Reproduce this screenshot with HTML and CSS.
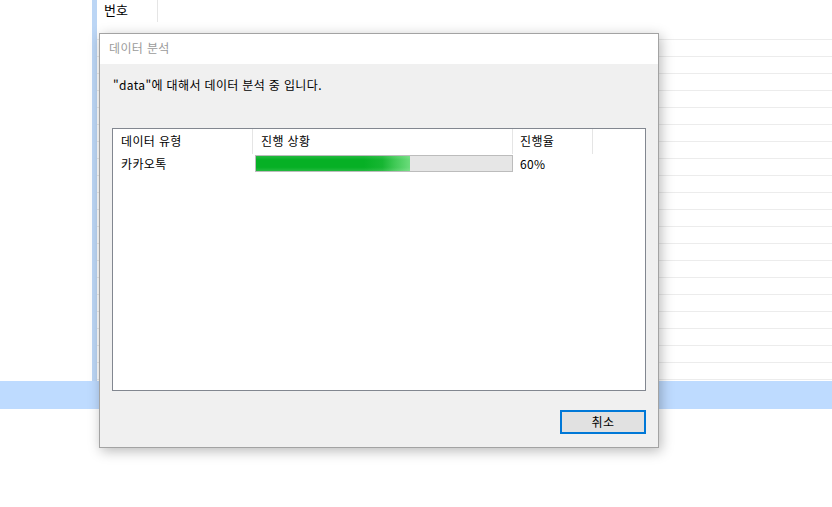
FILE: index.html
```html
<!DOCTYPE html>
<html lang="ko">
<head>
<meta charset="utf-8">
<link rel="stylesheet" href="styles.css">
</head>
<body>
<div class="page">
  <div class="list-area">
    <div class="gutter"></div>
    <div class="strip"></div>
    <div class="list">
      <div class="list-head">
        <div class="head-cell">번호</div>
      </div>
      <div class="row"></div><div class="row"></div><div class="row"></div><div class="row"></div>
      <div class="row"></div><div class="row"></div><div class="row"></div><div class="row"></div>
      <div class="row"></div><div class="row"></div><div class="row"></div><div class="row"></div>
      <div class="row"></div><div class="row"></div><div class="row"></div><div class="row"></div>
      <div class="row"></div><div class="row"></div><div class="row"></div><div class="row"></div>
      <div class="row"></div>
    </div>
  </div>
  <div class="selected-band"></div>
</div>

<div class="dialog">
  <div class="title-bar">데이터 분석</div>
  <div class="dialog-body">
    <div class="message">"data"에 대해서 데이터 분석 중 입니다.</div>
    <div class="listbox">
      <div class="lb-head">
        <div class="lb-col c1">데이터 유형</div>
        <div class="lb-col c2">진행 상황</div>
        <div class="lb-col c3">진행율</div>
        <div class="lb-col c4"></div>
      </div>
      <div class="lb-row">
        <div class="lb-cell c1">카카오톡</div>
        <div class="lb-cell c2">
          <div class="progress"><div class="progress-fill" style="width:60%"></div></div>
        </div>
        <div class="lb-cell c3">60%</div>
      </div>
    </div>
    <div class="buttons">
      <button class="btn">취소</button>
    </div>
  </div>
</div>
</body>
</html>
```
FILE: styles.css
```css
html, body {
  margin: 0;
  padding: 0;
  background: #ffffff;
  font-family: "Noto Sans CJK KR", "Noto Sans", sans-serif;
  font-size: 12px;
  letter-spacing: 0.35px;
  color: #000;
}

.page {
  width: 832px;
  height: 507px;
  overflow: hidden;
  display: flex;
  flex-direction: column;
}

.list-area {
  display: flex;
  height: 381px;
}

.gutter {
  width: 92px;
  flex: none;
}

.strip {
  width: 5px;
  flex: none;
  background: #bcd6f5;
}

.list {
  flex: 1;
  display: flex;
  flex-direction: column;
}

.list-head {
  height: 23px;
  display: flex;
  flex: none;
}

.head-cell {
  width: 53px;
  padding-left: 7px;
  border-right: 1px solid #e5e5e5;
  font-size: 13px;
  letter-spacing: 0;
  line-height: 20px;
  height: 22px;
}

.row {
  height: 17px;
  flex: none;
  box-sizing: border-box;
  border-bottom: 1px solid #ececec;
}

.selected-band {
  height: 28px;
  background: #bedbff;
  flex: none;
}

/* dialog */
.dialog {
  position: absolute;
  left: 99px;
  top: 33px;
  width: 558px;
  height: 413px;
  border: 1px solid #a3a3a3;
  background: #f0f0f0;
  box-shadow: 2px 3px 12px rgba(0, 0, 0, 0.28);
  display: flex;
  flex-direction: column;
}

.title-bar {
  height: 30px;
  background: #ffffff;
  color: #9b9b9b;
  padding-left: 9px;
  line-height: 28px;
  flex: none;
}

.dialog-body {
  flex: 1;
  display: flex;
  flex-direction: column;
  padding: 0 12px 13px 12px;
}

.message {
  height: 64px;
  padding-left: 1px;
  padding-top: 12px;
  box-sizing: border-box;
  line-height: 17px;
}

.listbox {
  height: 263px;
  box-sizing: border-box;
  border: 1px solid #828790;
  background: #ffffff;
  flex: none;
}

.lb-head {
  display: flex;
  height: 25px;
}

.lb-col {
  box-sizing: border-box;
  border-right: 1px solid #e5e5e5;
  height: 25px;
  line-height: 23px;
  padding-left: 8px;
}

.c1 { width: 140px; flex: none; }
.c2 { width: 260px; flex: none; }
.c3 { width: 80px; flex: none; }
.c4 { width: 0; }
.lb-col.c3 { padding-left: 7px; }
.lb-col.c4 { border-right: none; }

.lb-row {
  display: flex;
  height: 18px;
  align-items: center;
}

.lb-cell {
  box-sizing: border-box;
  padding-left: 8px;
  line-height: 17px;
}

.lb-cell.c2 {
  padding-left: 2px;
  padding-right: 0;
}

.lb-cell.c3 {
  padding-left: 7px;
}

.progress {
  height: 17px;
  box-sizing: border-box;
  border: 1px solid #bcbcbc;
  background: #e6e6e6;
}

.progress-fill {
  height: 100%;
  background:
    linear-gradient(to bottom, rgba(255,255,255,0.12) 0, rgba(255,255,255,0) 25%, rgba(255,255,255,0) 75%, rgba(255,255,255,0.12) 100%),
    linear-gradient(to right, #06b025 0, #06b025 70%, #16b632 82%, #3fc955 90%, #6bdc7b 100%);
}

.buttons {
  display: flex;
  justify-content: flex-end;
  margin-top: 19px;
}

.btn {
  width: 86px;
  height: 24px;
  box-sizing: border-box;
  border: 2px solid #0078d7;
  background: #e1e1e1;
  font-family: "Noto Sans CJK KR", "Noto Sans", sans-serif;
  font-size: 12px;
  letter-spacing: 0.35px;
  color: #000;
  padding: 0;
  line-height: 18px;
}
```
